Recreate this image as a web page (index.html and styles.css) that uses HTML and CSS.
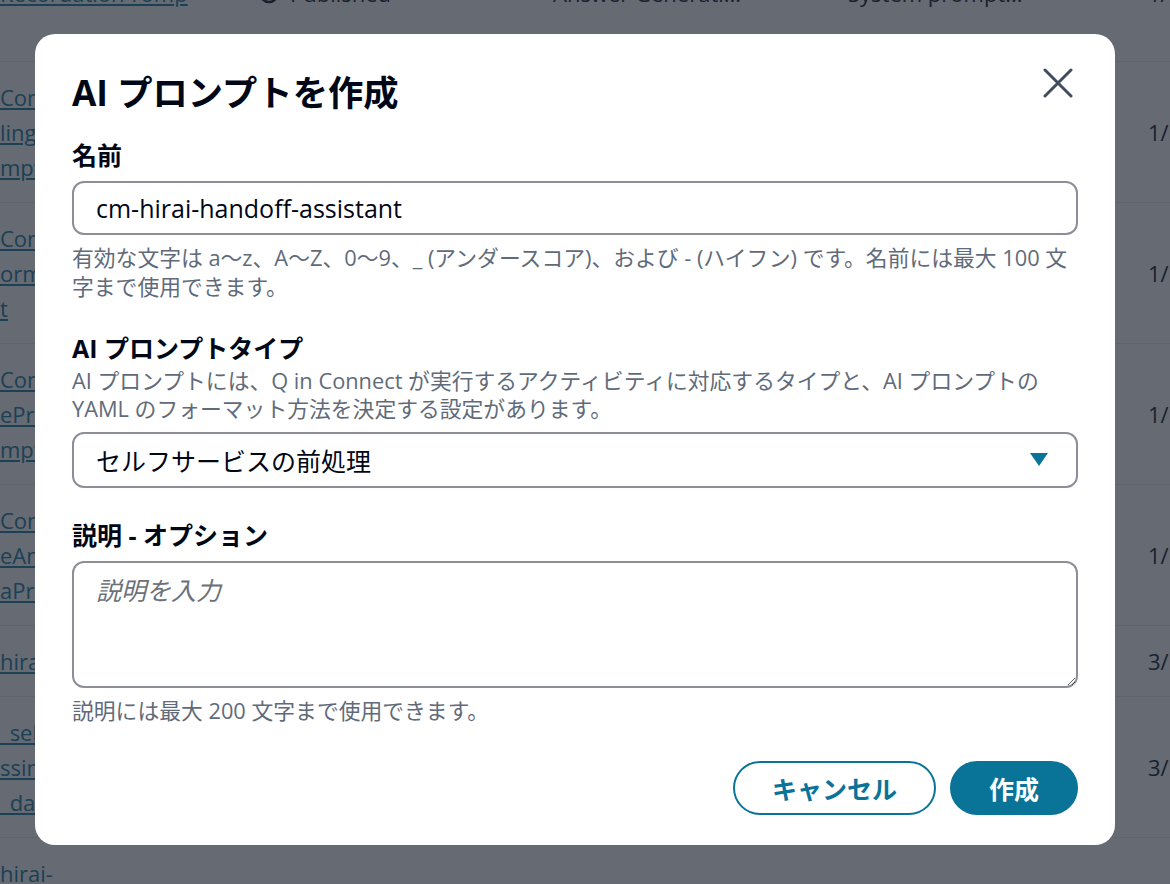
FILE: index.html
```html
<!DOCTYPE html>
<html lang="ja">
<head>
<meta charset="utf-8">
<title>AI プロンプトを作成</title>
<link rel="stylesheet" href="styles.css">
</head>
<body>
<div class="page">
  <div class="grid-table">
    <div class="row row-top">
      <div class="cell"><a class="lnk" href="#">Recordation-romp</a></div>
      <div class="cell status"><svg class="status-ic" viewBox="0 0 22 22" width="22" height="22"><circle cx="11" cy="11" r="9" fill="none" stroke="#000716" stroke-width="2.5"/><path d="M6.5 11.5l3 3 6-6" fill="none" stroke="#000716" stroke-width="2.5"/></svg><span>Published</span></div>
      <div class="cell">Answer Generati...</div>
      <div class="cell">System prompt...</div>
      <div class="cell">1/15/2025</div>
    </div>
    <div class="row">
      <div class="cell"><a class="lnk" href="#">ConnectIntent<br>lingPrompt<br>mpt</a></div>
      <div class="cell status"></div>
      <div class="cell"></div>
      <div class="cell"></div>
      <div class="cell">1/15/2025</div>
    </div>
    <div class="row">
      <div class="cell"><a class="lnk" href="#">ConnectAnswer<br>ormulation<br>t</a></div>
      <div class="cell"></div>
      <div class="cell"></div>
      <div class="cell"></div>
      <div class="cell">1/15/2025</div>
    </div>
    <div class="row">
      <div class="cell"><a class="lnk" href="#">ConnectSelfService<br>ePreProcessing<br>mpt</a></div>
      <div class="cell"></div>
      <div class="cell"></div>
      <div class="cell"></div>
      <div class="cell">1/15/2025</div>
    </div>
    <div class="row">
      <div class="cell"><a class="lnk" href="#">ConnectSelfService<br>eAnswerGeneration<br>aPrompt</a></div>
      <div class="cell"></div>
      <div class="cell"></div>
      <div class="cell"></div>
      <div class="cell">1/15/2025</div>
    </div>
    <div class="row">
      <div class="cell"><a class="lnk" href="#">hirai-prompt</a></div>
      <div class="cell"></div>
      <div class="cell"></div>
      <div class="cell"></div>
      <div class="cell">3/10/2025</div>
    </div>
    <div class="row">
      <div class="cell"><a class="lnk" href="#">_self_service<br>ssing_prompt<br>_date</a></div>
      <div class="cell"></div>
      <div class="cell"></div>
      <div class="cell"></div>
      <div class="cell">3/10/2025</div>
    </div>
    <div class="row">
      <div class="cell"><a class="lnk" href="#">hirai-</a></div>
      <div class="cell"></div>
      <div class="cell"></div>
      <div class="cell"></div>
      <div class="cell"></div>
    </div>
  </div>
</div>

<div class="overlay">
  <div class="modal" role="dialog" aria-labelledby="mt">
    <div class="modal-head">
      <h2 class="modal-title" id="mt">AI プロンプトを作成</h2>
      <button class="close" type="button" aria-label="閉じる">
        <svg viewBox="0 0 30 30" width="30" height="30"><path d="M2 2L28 28M28 2L2 28" stroke="#414d5c" stroke-width="3" stroke-linecap="round"/></svg>
      </button>
    </div>
    <div class="form">
      <div class="field">
        <label class="label" for="nm">名前</label>
        <input class="input" id="nm" type="text" value="cm-hirai-handoff-assistant">
        <p class="hint">有効な文字は a〜z、A〜Z、0〜9、_ (アンダースコア)、および - (ハイフン) です。名前には最大 100 文字まで使用できます。</p>
      </div>
      <div class="field">
        <div class="label">AI プロンプトタイプ</div>
        <p class="desc">AI プロンプトには、Q in Connect が実行するアクティビティに対応するタイプと、AI プロンプトの YAML のフォーマット方法を決定する設定があります。</p>
        <div class="select" role="button" tabindex="0">
          <span>セルフサービスの前処理</span>
          <svg class="caret" viewBox="0 0 18 14" width="18" height="14"><polygon points="0,0 18,0 9,13" fill="#0a7398"/></svg>
        </div>
      </div>
      <div class="field">
        <label class="label" for="ds">説明 - オプション</label>
        <textarea class="textarea" id="ds" placeholder="説明を入力"></textarea>
        <p class="hint">説明には最大 200 文字まで使用できます。</p>
      </div>
    </div>
    <div class="foot">
      <button class="btn btn-normal" type="button">キャンセル</button>
      <button class="btn btn-primary" type="button">作成</button>
    </div>
  </div>
</div>
</body>
</html>
```

FILE: styles.css
```css
* { box-sizing: border-box; }
html, body { margin: 0; height: 100%; }
body {
  font-family: "Open Sans", "Noto Sans CJK JP", sans-serif;
  background: #ffffff;
  color: #000716;
  overflow: hidden;
}

/* background page */
.page { margin-top: -78px; }
.grid-table { width: 1460px; }
.row {
  display: grid;
  grid-template-columns: 258px 295px 295px 300px 312px;
  align-items: center;
  padding: 18px 0 17px 0;
  border-bottom: 1px solid #e9ebed;
  font-size: 22px;
  line-height: 35px;
}
.row-top { min-height: 140px; padding: 19px 0 16px 0; }
.cell { white-space: nowrap; overflow: hidden; }
.lnk { color: #0a7398; text-decoration: underline; }
.status { display: flex; align-items: center; gap: 10px; }

/* overlay + modal */
.overlay {
  position: fixed;
  inset: 0;
  background: rgba(35, 43, 55, 0.7);
  padding: 34px 0 0 35px;
}
.modal {
  width: 1080px;
  background: #ffffff;
  border-radius: 20px;
  padding: 36px 37px 30px 37px;
}
.modal-head {
  display: flex;
  justify-content: space-between;
  align-items: flex-start;
}
.modal-title {
  margin: 0;
  font-size: 35.3px;
  line-height: 44px;
  font-weight: 700;
  color: #000716;
}
.close {
  background: none;
  border: 0;
  padding: 0;
  margin: -2px 5px 0 0;
  width: 30px;
  height: 30px;
  cursor: pointer;
}
.close svg { display: block; }

.form {
  margin-top: 25px;
  display: flex;
  flex-direction: column;
  gap: 31px;
}
.field { display: flex; flex-direction: column; }
.label {
  font-size: 25px;
  line-height: 32px;
  font-weight: 700;
  color: #000716;
  margin-bottom: 10px;
}
.desc {
  margin: -7px 0 9px 0;
  font-size: 21.8px;
  line-height: 28px;
  color: #5f6b7a;
}
.hint {
  margin: 8px 0 0 0;
  font-size: 21.8px;
  line-height: 29px;
  color: #5f6b7a;
}
.input, .select, .textarea {
  width: 100%;
  border: 2px solid #8c8f97;
  border-radius: 12px;
  background: #ffffff;
  font-family: inherit;
  font-size: 25px;
  color: #000716;
}
.input {
  height: 54px;
  padding: 0 22px;
  line-height: 34px;
  outline: none;
}
.select {
  height: 56px;
  padding: 0 28px 0 22px;
  display: flex;
  align-items: center;
  justify-content: space-between;
}
.caret { display: block; }
.textarea {
  height: 127px;
  padding: 10px 22px;
  line-height: 34px;
  resize: vertical;
  outline: none;
  display: block;
}
.textarea::placeholder {
  color: #6b7079;
  font-style: italic;
}

.foot {
  margin-top: 36px;
  display: flex;
  justify-content: flex-end;
  gap: 14px;
}
.btn {
  height: 54px;
  border-radius: 27px;
  padding: 0 37px;
  font-family: inherit;
  font-size: 25px;
  font-weight: 700;
  border: 2px solid #0a7398;
  cursor: pointer;
}
.btn-normal { background: #ffffff; color: #0a7398; }
.btn-primary { background: #0a7398; color: #ffffff; }
```
